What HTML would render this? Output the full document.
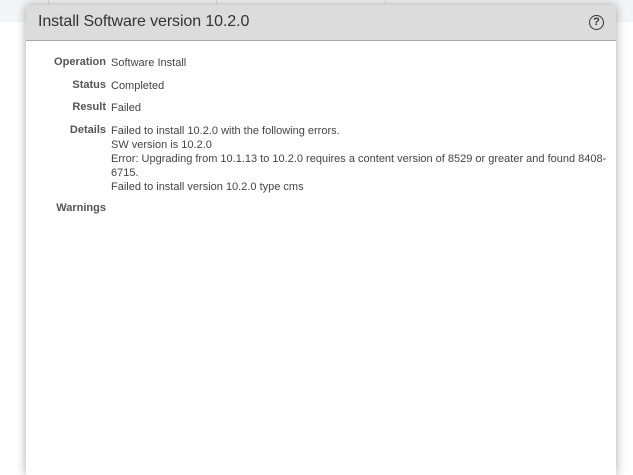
<!DOCTYPE html>
<html><head><style>
body{margin:0;width:633px;height:459px;background:#fff;position:relative;overflow:hidden;font-family:"Liberation Sans",sans-serif;}
.top{position:absolute;left:0;top:0;width:633px;height:22px;background:#f3f6f8;}
.vl{position:absolute;top:0;height:22px;width:1px;background:#dde2e6;}
.dlg{position:absolute;left:26px;top:5px;width:590px;height:470px;background:#fff;box-shadow:0 0 10px rgba(0,0,0,0.35);border-radius:3px 3px 0 0;}
.hd{height:35px;background:#dcdcdc;border-bottom:1px solid #a8a8a8;border-radius:3px 3px 0 0;position:relative;}
.hd .t{position:absolute;left:12px;top:8px;font-size:16px;color:#333;letter-spacing:-0.1px;}
.help{position:absolute;right:12px;top:10px;width:13px;height:13px;border:1.5px solid #333;border-radius:50%;font-size:11px;font-weight:bold;text-align:center;line-height:13px;color:#333;}
.lb{position:absolute;right:510px;font-size:11px;font-weight:bold;color:#555;text-align:right;white-space:nowrap;}
.v{position:absolute;left:85px;font-size:11px;color:#444;line-height:14px;white-space:nowrap;}
</style></head><body>
<div class="top"></div>
<div class="vl" style="left:48px"></div><div class="vl" style="left:216px"></div><div class="vl" style="left:385px"></div>
<div class="dlg">
<div class="hd"><div class="t">Install Software version 10.2.0</div><div class="help">?</div></div>
<div class="lb" style="top:51px">Operation</div><div class="v" style="top:51px">Software Install</div>
<div class="lb" style="top:74px">Status</div><div class="v" style="top:74px">Completed</div>
<div class="lb" style="top:96px">Result</div><div class="v" style="top:96px">Failed</div>
<div class="lb" style="top:119px">Details</div>
<div class="v" style="top:119px">Failed to install 10.2.0 with the following errors.<br>SW version is 10.2.0<br>Error: Upgrading from 10.1.13 to 10.2.0 requires a content version of 8529 or greater and found 8408-<br>6715.<br>Failed to install version 10.2.0 type cms</div>
<div class="lb" style="top:197px">Warnings</div>
</div>
</body></html>
